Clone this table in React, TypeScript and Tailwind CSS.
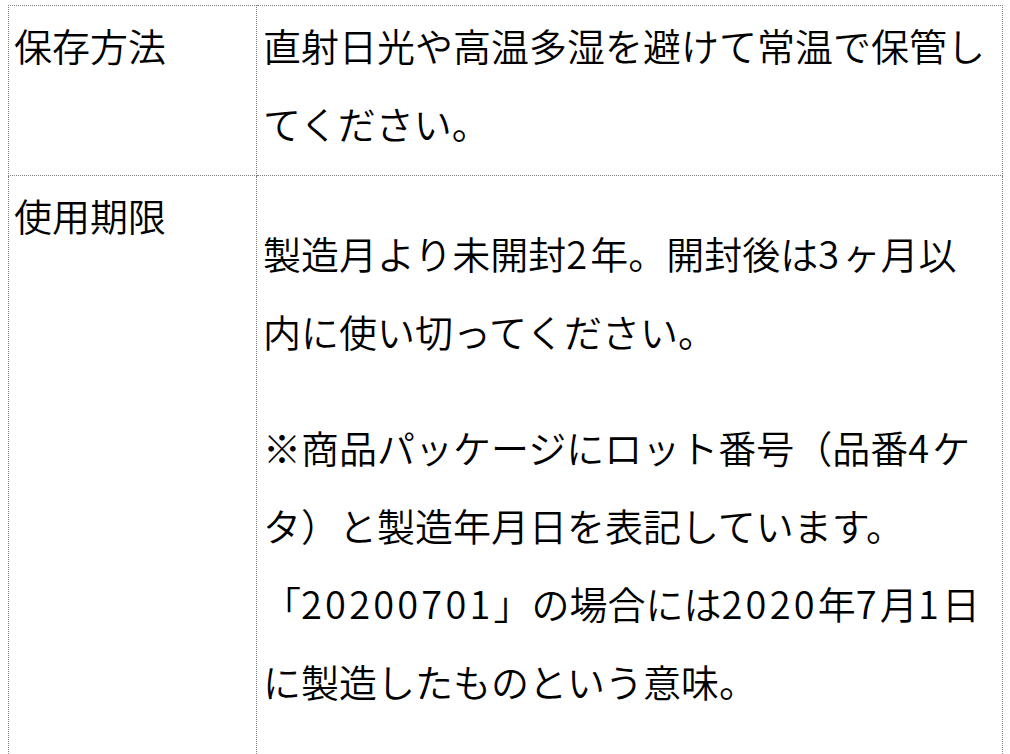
import React from 'react';

interface SpecRow {
  label: string;
  paragraphs: string[][]; // each paragraph is a list of lines
  plain?: boolean; // plain text with no paragraph margins
}

const ROWS: SpecRow[] = [
  {
    label: '保存方法',
    plain: true,
    paragraphs: [['直射日光や高温多湿を避けて常温で保管し', 'てください。']],
  },
  {
    label: '使用期限',
    paragraphs: [
      ['製造月より未開封2年。開封後は3ヶ月以', '内に使い切ってください。'],
      [
        '※商品パッケージにロット番号（品番4ケ',
        'タ）と製造年月日を表記しています。',
        '「20200701」の場合には2020年7月1日',
        'に製造したものという意味。',
      ],
    ],
  },
];

// digits in the source font are a little wider than Noto's, so space them out
function Digits({ text }: { text: string }): React.ReactElement {
  const parts = text.split(/(\d+)/);
  return (
    <>
      {parts.map((part, i) =>
        /^\d+$/.test(part) ? (
          <span key={i} className="tracking-[3.2px]">
            {part}
          </span>
        ) : (
          <React.Fragment key={i}>{part}</React.Fragment>
        )
      )}
    </>
  );
}

function Lines({ lines }: { lines: string[] }): React.ReactElement {
  return (
    <>
      {lines.map((line, i) => (
        <React.Fragment key={i}>
          {i > 0 && <br />}
          <Digits text={line} />
        </React.Fragment>
      ))}
    </>
  );
}

export default function App(): React.ReactElement {
  return (
    <div
      className="h-[754px] overflow-hidden bg-white pl-[8px] pt-[5px] text-black"
      style={{ fontFamily: '"Noto Sans CJK JP", "Noto Sans", sans-serif' }}
    >
      <table className="w-[994px] table-fixed border-collapse text-[38px] font-[350] leading-[78px]">
        <colgroup>
          <col className="w-[248px]" />
          <col className="w-[746px]" />
        </colgroup>
        <tbody>
          {ROWS.map((row) => (
            <tr key={row.label}>
              <td className="border border-dotted border-[#808080] pl-[5px] pr-[6px] pt-0 pb-[13px] align-top whitespace-nowrap">
                {row.label}
              </td>
              <td className="border border-dotted border-[#808080] pl-[6px] pr-[6px] pt-0 pb-[13px] align-top whitespace-nowrap">
                {row.plain ? (
                  <Lines lines={row.paragraphs[0]} />
                ) : (
                  row.paragraphs.map((p, i) => (
                    <p key={i} className="my-[38px]">
                      <Lines lines={p} />
                    </p>
                  ))
                )}
              </td>
            </tr>
          ))}
        </tbody>
      </table>
    </div>
  );
}
